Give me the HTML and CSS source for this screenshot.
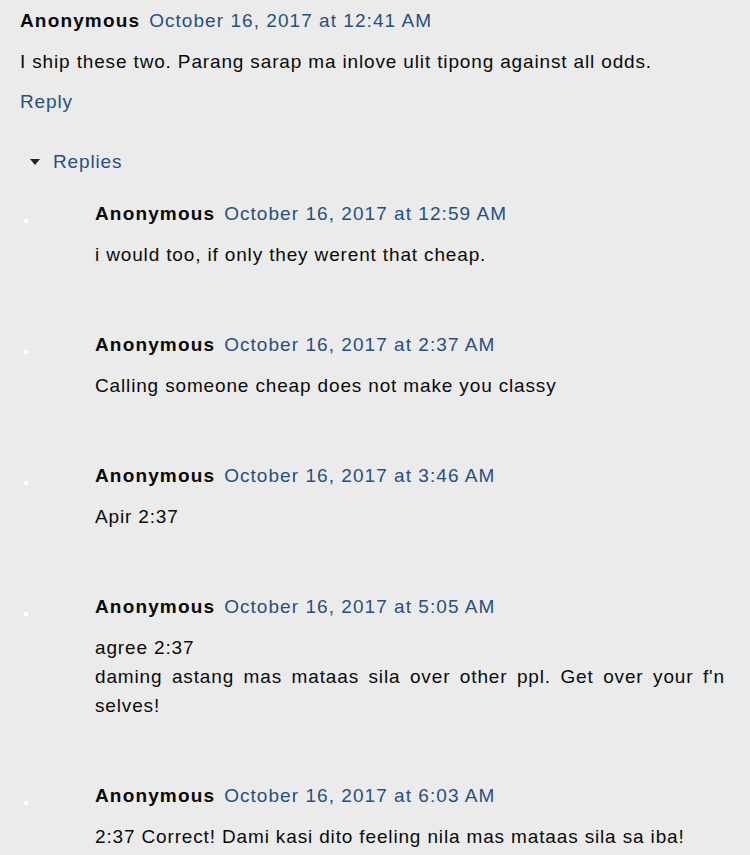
FILE: index.html
```html
<!DOCTYPE html>
<html>
<head>
<meta charset="utf-8">
<link rel="stylesheet" href="styles.css">
</head>
<body>
<div class="thread">
  <div class="comment">
    <div class="head"><span class="author">Anonymous</span><a class="date" href="#">October 16, 2017 at 12:41 AM</a></div>
    <p class="text">I ship these two. Parang sarap ma inlove ulit tipong against all odds.</p>
    <a class="reply" href="#">Reply</a>
  </div>
  <div class="toggle"><span class="tri"></span><a class="replies-link" href="#">Replies</a></div>
  <ul class="replies">
    <li class="item">
      <span class="dot"></span>
      <div class="content">
        <div class="head"><span class="author">Anonymous</span><a class="date" href="#">October 16, 2017 at 12:59 AM</a></div>
        <p class="text">i would too, if only they werent that cheap.</p>
      </div>
    </li>
    <li class="item">
      <span class="dot"></span>
      <div class="content">
        <div class="head"><span class="author">Anonymous</span><a class="date" href="#">October 16, 2017 at 2:37 AM</a></div>
        <p class="text">Calling someone cheap does not make you classy</p>
      </div>
    </li>
    <li class="item">
      <span class="dot"></span>
      <div class="content">
        <div class="head"><span class="author">Anonymous</span><a class="date" href="#">October 16, 2017 at 3:46 AM</a></div>
        <p class="text">Apir 2:37</p>
      </div>
    </li>
    <li class="item">
      <span class="dot"></span>
      <div class="content">
        <div class="head"><span class="author">Anonymous</span><a class="date" href="#">October 16, 2017 at 5:05 AM</a></div>
        <p class="text">agree 2:37<br>daming astang mas mataas sila over other ppl. Get over your f'n selves!</p>
      </div>
    </li>
    <li class="item">
      <span class="dot"></span>
      <div class="content">
        <div class="head"><span class="author">Anonymous</span><a class="date" href="#">October 16, 2017 at 6:03 AM</a></div>
        <p class="text">2:37 Correct! Dami kasi dito feeling nila mas mataas sila sa iba!</p>
      </div>
    </li>
  </ul>
</div>
</body>
</html>
```
FILE: styles.css
```css
html, body {
  margin: 0;
  padding: 0;
  background: #ebebeb;
}
body {
  font-family: "Liberation Sans", Arial, sans-serif;
  font-size: 19px;
  letter-spacing: 0.85px;
  color: #0a0a0a;
  line-height: 29px;
}
a {
  color: #27507f;
  text-decoration: none;
}
.thread {
  padding: 6px 25px 0 20px;
}
.head {
  white-space: nowrap;
}
.author {
  font-weight: bold;
  letter-spacing: 1.15px;
  margin-right: 9px;
}
.date {
  letter-spacing: 1.05px;
}
.text {
  margin: 12px 0 0;
  text-align: justify;
}
.reply {
  display: inline-block;
  margin-top: 11px;
}
.toggle {
  margin-top: 31px;
  display: flex;
  align-items: center;
  padding-left: 10px;
}
.tri {
  width: 0;
  height: 0;
  border-left: 5px solid transparent;
  border-right: 5px solid transparent;
  border-top: 6px solid #222;
  margin-right: 13px;
}
.replies {
  list-style: none;
  margin: 23px 0 0;
  padding: 0;
}
.item {
  display: flex;
  margin-bottom: 61px;
}
.dot {
  flex: none;
  width: 4px;
  height: 4px;
  background: #fff;
  margin: 20px 67px 0 4px;
}
.content {
  flex: 1;
}
```
